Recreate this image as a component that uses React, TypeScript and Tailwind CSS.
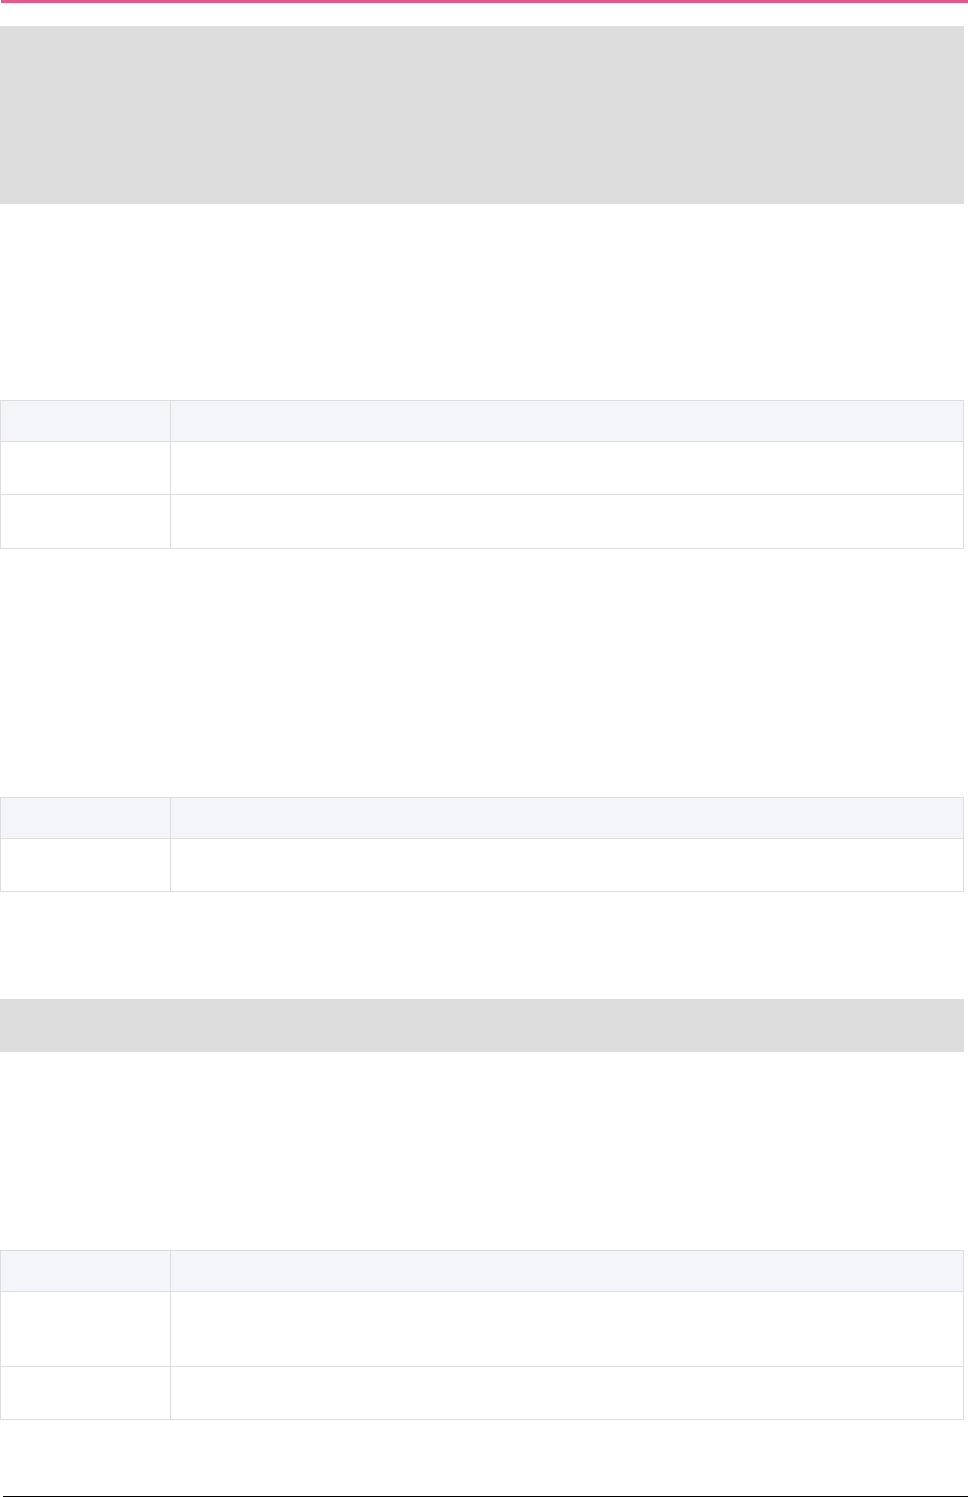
type Table = {
  rows: number[]
}

// header interior height is 40px, body rows vary
function EmptyTable({ rows }: Table) {
  return (
    <div className="w-[964px] border border-[#dddddd]">
      <div className="flex h-[41px] border-b border-[#dddddd] bg-[#f4f5fa]">
        <div className="w-[170px] border-r border-[#dddddd]"></div>
        <div className="flex-1"></div>
      </div>
      {rows.map((h, i) => (
        <div
          key={i}
          className={i < rows.length - 1 ? "flex border-b border-[#dddddd]" : "flex"}
          style={{ height: i < rows.length - 1 ? h + 1 : h }}
        >
          <div className="w-[170px] border-r border-[#dddddd]"></div>
          <div className="flex-1"></div>
        </div>
      ))}
    </div>
  )
}

export default function App() {
  return (
    <div className="min-h-[1497px] bg-white font-['Liberation_Sans',sans-serif]">
      <div className="ml-px h-[3px] bg-[#e8588c]"></div>

      {/* top banner */}
      <div className="mt-[23px] h-[178px] w-[964px] bg-[#dddddd]"></div>

      <div className="mt-[196px]">
        <EmptyTable rows={[52, 53]} />
      </div>

      <div className="mt-[248px]">
        <EmptyTable rows={[52]} />
      </div>

      <div className="mt-[107px] h-[53px] w-[964px] bg-[#dddddd]"></div>

      <div className="mt-[198px]">
        <EmptyTable rows={[74, 52]} />
      </div>

      <div className="ml-[3px] mt-[76px] h-px bg-black"></div>
    </div>
  )
}
